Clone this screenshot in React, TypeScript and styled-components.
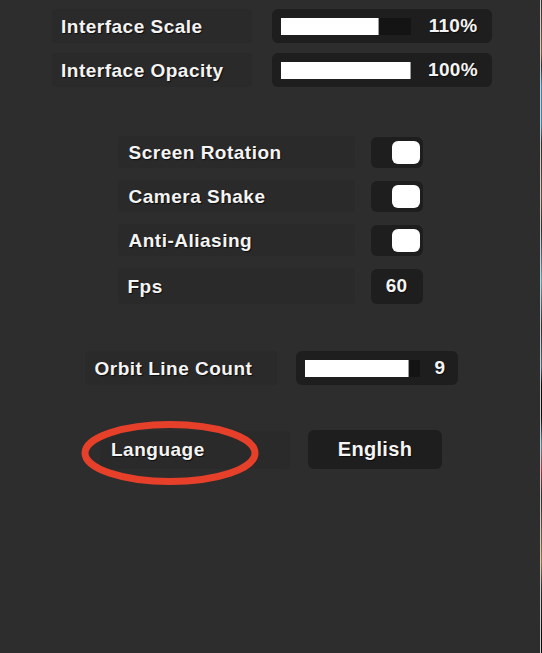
import React from 'react';
import styled, { createGlobalStyle } from 'styled-components';

const GlobalStyle = createGlobalStyle`
  html, body {
    margin: 0;
    padding: 0;
    background: #2d2d2d;
  }
  body {
    font-family: 'Liberation Sans', Arial, sans-serif;
    font-weight: 700;
    color: #f4f4f4;
  }
`;

const Screen = styled.div`
  display: flex;
  width: 542px;
  height: 653px;
  overflow: hidden;
`;

const Panel = styled.main`
  flex: 0 0 540px;
  display: flex;
  flex-direction: column;
  align-items: center;
  background: #2d2d2d;
  padding: 9px 0 0 4px;
  box-sizing: border-box;
`;

const Edge = styled.div`
  flex: 0 0 2px;
  border-left: 1px solid #cfcfcf;
  box-sizing: border-box;
  background: linear-gradient(
    #2d2d2d 0%, #8a5a2a 8%, #2d2d2d 10%, #2f86b8 13%, #2f86b8 19%, #2d2d2d 22%,
    #6a4a30 30%, #2d2d2d 35%, #5aa0c0 43%, #2d2d2d 50%, #3d6a80 56%, #0a0a0a 59%,
    #0a0a0a 64%, #4a8aa0 68%, #b03030 72%, #2d2d2d 76%, #a07030 86%, #2d2d2d 90%,
    #0a0a0a 97%
  );
`;

const Group = styled.section<{ $top: number; $gap: number; $dx?: number }>`
  display: flex;
  flex-direction: column;
  align-items: center;
  gap: ${p => p.$gap}px;
  margin-top: ${p => p.$top}px;
  margin-left: ${p => (p.$dx ?? 0) * 2}px;
`;

const Row = styled.div<{ $gap: number }>`
  display: flex;
  align-items: center;
  gap: ${p => p.$gap}px;
`;

const Label = styled.div<{ $w: number; $h: number; $pad: number }>`
  width: ${p => p.$w}px;
  height: ${p => p.$h}px;
  padding: 1px 0 0 ${p => p.$pad}px;
  box-sizing: border-box;
  display: flex;
  align-items: center;
  font-size: 19px;
  letter-spacing: 0.5px;
  background: #2a2a2a;
  border-radius: 4px;
  text-shadow: 1px 1px 1px rgba(0, 0, 0, 0.7);
  white-space: nowrap;
`;

const Control = styled.div<{ $w: number; $h: number }>`
  width: ${p => p.$w}px;
  height: ${p => p.$h}px;
  box-sizing: border-box;
  display: flex;
  align-items: center;
  background: #1e1e1e;
  border-radius: 6px;
  font-size: 19px;
  letter-spacing: 0.3px;
  text-shadow: 1px 1px 1px rgba(0, 0, 0, 0.6);
`;

const Track = styled.div<{ $w: number }>`
  width: ${p => p.$w}px;
  height: 17px;
  margin-left: 9px;
  background: #141414;
  display: flex;
`;

const Fill = styled.div`
  height: 100%;
  background: #ffffff;
  border-right: 1px solid #9a9a9a;
  box-sizing: border-box;
`;

const Value = styled.span`
  flex: 1;
  text-align: center;
  padding-left: 3px;
`;

const Toggle = styled(Control)`
  justify-content: flex-end;
  padding-right: 3px;
`;

const Knob = styled.div`
  width: 28px;
  height: 23px;
  background: #ffffff;
  border-radius: 6px;
`;

const Centered = styled(Control)<{ $size?: number }>`
  justify-content: center;
  font-size: ${p => p.$size ?? 19}px;
`;

const Annotated = styled.div`
  position: relative;
`;

const Circle = styled.svg`
  position: absolute;
  left: -19px;
  top: -10px;
  pointer-events: none;
`;

type SliderProps = {
  label: string;
  value: string;
  ratio: number;
  trackW: number;
  labelW: number;
  ctrlW: number;
  gap: number;
  pad: number;
};

const SliderRow: React.FC<SliderProps> = ({ label, value, ratio, trackW, labelW, ctrlW, gap, pad }) => (
  <Row $gap={gap}>
    <Label $w={labelW} $h={34} $pad={pad}>{label}</Label>
    <Control $w={ctrlW} $h={34}>
      <Track $w={trackW}>
        <Fill style={{ width: `${ratio * 100}%` }} />
      </Track>
      <Value>{value}</Value>
    </Control>
  </Row>
);

const ToggleRow: React.FC<{ label: string }> = ({ label }) => (
  <Row $gap={16}>
    <Label $w={237} $h={32} $pad={11}>{label}</Label>
    <Toggle $w={52} $h={31}>
      <Knob />
    </Toggle>
  </Row>
);

const App: React.FC = () => (
  <>
    <GlobalStyle />
    <Screen>
      <Panel>
        <Group $top={0} $gap={10}>
          <SliderRow label="Interface Scale" value="110%" ratio={0.75} trackW={130} labelW={200} ctrlW={220} gap={20} pad={9} />
          <SliderRow label="Interface Opacity" value="100%" ratio={1} trackW={130} labelW={200} ctrlW={220} gap={20} pad={9} />
        </Group>

        <Group $top={49} $gap={12} $dx={-2}>
          <ToggleRow label="Screen Rotation" />
          <ToggleRow label="Camera Shake" />
          <ToggleRow label="Anti-Aliasing" />
          <Row $gap={16}>
            <Label $w={237} $h={36} $pad={10}>Fps</Label>
            <Centered $w={52} $h={35}>60</Centered>
          </Row>
        </Group>

        <Group $top={47} $gap={0} $dx={-1}>
          <SliderRow label="Orbit Line Count" value="9" ratio={0.91} trackW={115} labelW={192} ctrlW={162} gap={19} pad={10} />
        </Group>

        <Group $top={45} $gap={0} $dx={-1}>
          <Row $gap={18}>
            <Annotated>
              <Label $w={190} $h={38} $pad={11}>Language</Label>
              <Circle width="180" height="66" viewBox="0 0 180 66">
                <ellipse cx="89" cy="32" rx="85" ry="28.5" fill="none" stroke="#e6402a" strokeWidth="7" />
              </Circle>
            </Annotated>
            <Centered $w={134} $h={39} $size={20}>English</Centered>
          </Row>
        </Group>
      </Panel>
      <Edge />
    </Screen>
  </>
);

export default App;
